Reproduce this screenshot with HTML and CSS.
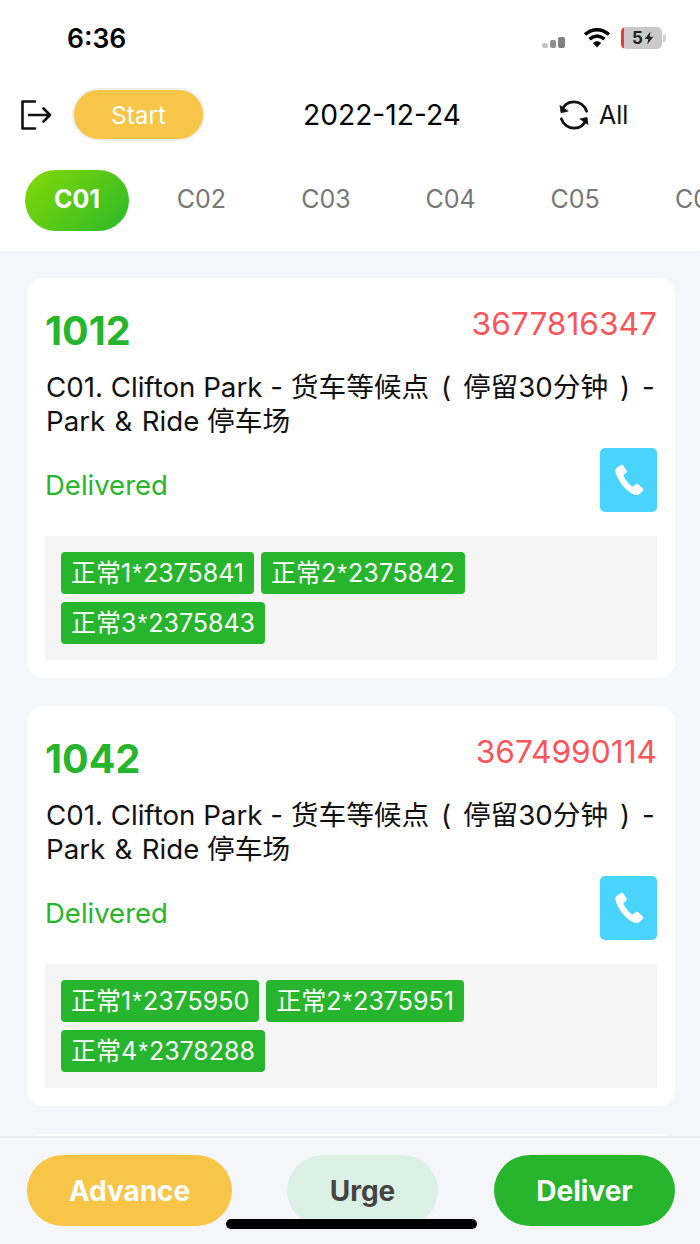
FILE: index.html
```html
<!DOCTYPE html>
<html lang="en">
<head>
<meta charset="utf-8">
<title>Deliveries</title>
<link rel="stylesheet" href="styles.css">
</head>
<body>
<div class="app">
  <header class="header">
    <div class="status">
      <span class="time">6:36</span>
      <div class="status-icons">
        <svg class="signal" width="24" height="14" viewBox="0 0 24 14"><rect x="0" y="7" width="6" height="5" rx="2" fill="#c4c4c4"/><rect x="8" y="4" width="6" height="8" rx="2" fill="#8f8f8f"/><rect x="16" y="1" width="7" height="11" rx="2" fill="#808080"/></svg>
        <svg class="wifi" width="28" height="22" viewBox="0 0 28 22"><path d="M2 7.500C9.500 1 18.500 1 26 7.500" fill="none" stroke="#000" stroke-width="3.500"/><path d="M6.500 12.200C11.500 8 16.500 8 21.500 12.200" fill="none" stroke="#000" stroke-width="3.500"/><path d="M9.800 16C12.500 13.500 15.500 13.500 18.200 16L14 20.500Z" fill="#000"/></svg>
        <div class="battery"><span class="batt-red"></span><span class="batt-text">5</span><svg class="bolt" width="10" height="14" viewBox="0 0 10 14"><path d="M6.500 0.500L0.800 8H4.300L3.300 13.500L9.200 5.800H5.700Z" fill="#222"/></svg></div>
        <span class="batt-cap"></span>
      </div>
    </div>
    <div class="toolbar">
      <svg class="logout" width="32" height="32" viewBox="0 0 32 32"><path d="M15 2.500H2.500V29.500H15" fill="none" stroke="#111" stroke-width="2.600" stroke-linecap="round" stroke-linejoin="round"/><path d="M9 16H30M23.500 9.500L30 16L23.500 22.500" fill="none" stroke="#111" stroke-width="2.600" stroke-linecap="round" stroke-linejoin="round"/></svg>
      <button class="start">Start</button>
      <span class="date">2022-12-24</span>
      <div class="all">
        <svg width="32" height="30" viewBox="0 0 34 32"><path d="M4 11.500C6 5.500 11 2 17 2C23 2 28.500 5.800 30.500 12" fill="none" stroke="#111" stroke-width="2.900" stroke-linecap="round"/><path d="M30 20.500C28 26.500 23 30 17 30C11 30 5.500 26.200 3.500 20" fill="none" stroke="#111" stroke-width="2.900" stroke-linecap="round"/><path d="M1.500 5L3 14L11.500 12Z" fill="#111"/><path d="M32.500 27L31 18L22.500 20Z" fill="#111"/></svg>
        <span>All</span>
      </div>
    </div>
    <nav class="tabs">
      <span class="tab active">C01</span>
      <span class="tab">C02</span>
      <span class="tab">C03</span>
      <span class="tab">C04</span>
      <span class="tab">C05</span>
      <span class="tab">C06</span>
    </nav>
  </header>
  <main class="list">
    <article class="card">
      <div class="card-top"><span class="code">1012</span><span class="phone">3677816347</span></div>
      <p class="addr">C01. Clifton Park - <span class="cn">货车等候点 ( 停留30分钟 ) -</span> <span class="en">Park &amp; Ride</span> 停车场</p>
      <div class="state-row"><span class="state">Delivered</span>
        <button class="call"><svg width="30" height="32" viewBox="0 0 30 32"><path d="M6.500 1.200L3.300 3.200C1.200 4.500 0.800 6.800 1.800 9.500C3.800 15 6.700 20 11 24.300C14 27.300 18 30.300 21 31C23 31.500 24.500 30.800 26 29.500L28.700 27C29.500 26.200 29.500 25.200 28.800 24.500L24.300 20.300C23.500 19.600 22.500 19.500 21.700 20.200L19.500 22C18.700 22.600 17.800 22.500 17 21.800C14 19.300 11.500 16 9.800 12.500C9.400 11.600 9.600 10.800 10.400 10.200L12 9C12.800 8.300 13 7.400 12.500 6.500L9.500 1.800C8.800 0.800 7.500 0.600 6.500 1.200Z" fill="#fff"/></svg></button>
      </div>
      <div class="tags">
        <span class="tag">正常1<span class="star">*</span>2375841</span>
        <span class="tag">正常2<span class="star">*</span>2375842</span>
        <span class="tag">正常3<span class="star">*</span>2375843</span>
      </div>
    </article>
    <article class="card">
      <div class="card-top"><span class="code">1042</span><span class="phone">3674990114</span></div>
      <p class="addr">C01. Clifton Park - <span class="cn">货车等候点 ( 停留30分钟 ) -</span> <span class="en">Park &amp; Ride</span> 停车场</p>
      <div class="state-row"><span class="state">Delivered</span>
        <button class="call"><svg width="30" height="32" viewBox="0 0 30 32"><path d="M6.500 1.200L3.300 3.200C1.200 4.500 0.800 6.800 1.800 9.500C3.800 15 6.700 20 11 24.300C14 27.300 18 30.300 21 31C23 31.500 24.500 30.800 26 29.500L28.700 27C29.500 26.200 29.500 25.200 28.800 24.500L24.300 20.300C23.500 19.600 22.500 19.500 21.700 20.200L19.500 22C18.700 22.600 17.800 22.500 17 21.800C14 19.300 11.500 16 9.800 12.500C9.400 11.600 9.600 10.800 10.400 10.200L12 9C12.800 8.300 13 7.400 12.500 6.500L9.500 1.800C8.800 0.800 7.500 0.600 6.500 1.200Z" fill="#fff"/></svg></button>
      </div>
      <div class="tags">
        <span class="tag">正常1<span class="star">*</span>2375950</span>
        <span class="tag">正常2<span class="star">*</span>2375951</span>
        <span class="tag">正常4<span class="star">*</span>2378288</span>
      </div>
    </article>
    <article class="card card-peek"></article>
  </main>
  <footer class="footer">
    <button class="act advance">Advance</button>
    <button class="act urge">Urge</button>
    <button class="act deliver">Deliver</button>
  </footer>
  <div class="home-bar"></div>
</div>
</body>
</html>
```

FILE: styles.css
```css
* { box-sizing: border-box; }
html, body { margin: 0; padding: 0; }
body { width: 700px; height: 1244px; overflow: hidden; background: #f5f6fa; font-family: Inter, "Noto Sans CJK SC", sans-serif; color: #111; }
button { font-family: inherit; border: 0; padding: 0; }
.app { position: relative; width: 700px; height: 1244px; overflow: hidden; display: flex; flex-direction: column; }

.header { height: 251px; background: #fff; flex: none; box-shadow: 0 1px 3px rgba(0,0,0,.02); }
.status { height: 76px; display: flex; align-items: center; justify-content: space-between; padding: 0 34px 0 67px; }
.time { font-size: 26.500px; font-weight: 600; color: #000; }
.status-icons { display: flex; align-items: center; }
.signal { margin: 10px 17px 0 0; }
.wifi { margin-right: 10px; }
.battery { width: 41px; height: 22px; background: #c9c9c9; border-radius: 5px; position: relative; overflow: hidden; display: flex; align-items: center; justify-content: center; padding-left: 3px; gap: 1px; }
.batt-red { position: absolute; left: 0; top: 0; bottom: 0; width: 3px; background: #f0383a; }
.batt-text { font-size: 17px; font-weight: 700; color: #222; }
.batt-cap { width: 3px; height: 8px; background: #d3d3d3; border-radius: 0 2px 2px 0; margin-left: 1px; }

.toolbar { height: 78px; display: flex; align-items: center; padding-left: 20px; }
.logout { flex: none; margin-top: -1px; }
.start { width: 133px; height: 53px; margin-left: 20px; border-radius: 27px; background: #f7c548; border: 2px solid #eeeeee; color: #fff; font-size: 24.300px; margin-top: -1px; }
.date { margin-left: 98px; font-size: 28.200px; color: #000; width: 157px; white-space: nowrap; }
.all { margin-left: 98px; display: flex; align-items: center; gap: 9px; font-size: 25px; color: #111; }

.tabs { height: 97px; display: flex; align-items: center; padding-left: 25px; gap: 0; overflow: hidden; margin-top: -2px; }
.tab { flex: none; width: 124.600px; text-align: center; font-size: 25px; color: #777; padding-bottom: 3px; }
.tab.active { width: 104px; height: 61px; line-height: 58px; padding-bottom: 0; border-radius: 31px; margin-right: 10px; color: #fff; font-weight: 700; background: linear-gradient(135deg, #86da06, #2ab82a); }

.list { flex: 1; padding: 27px 25px 0 27px; display: flex; flex-direction: column; gap: 28px; }
.card { background: #fff; border-radius: 16px; height: 400px; flex: none; padding: 22px 18px 18px 18px; }
.card-top { display: flex; justify-content: space-between; align-items: flex-start; height: 70px; }
.code { font-size: 39.500px; font-weight: 700; color: #26b52d; line-height: 62px; }
.phone { font-size: 31.700px; color: #f9555b; line-height: 48px; }
.addr { margin: 0 0 0 1px; font-size: 27.700px; line-height: 34px; color: #111; height: 68px; }
.cn { word-spacing: 4px; }
.en { word-spacing: 1.500px; }
.state-row { display: flex; justify-content: space-between; align-items: center; height: 64px; margin-top: 10px; }
.state { font-size: 27.500px; color: #26b52d; padding-top: 9px; }
.call { width: 57px; height: 64px; background: #48d4fd; border-radius: 5px; display: flex; align-items: center; justify-content: center; }
.tags { margin-top: 24px; height: 124px; background: #f5f5f5; padding: 16px 16px; display: flex; flex-wrap: wrap; gap: 8px 7px; align-content: flex-start; }
.tag { height: 42px; line-height: 42px; padding: 0 10px; background: #26b52d; border-radius: 4px; color: #fff; font-size: 25px; white-space: nowrap; }
.star { font-family: "Liberation Sans", sans-serif; margin: 0 1px; }

.footer { position: absolute; left: 0; right: 0; bottom: 0; height: 108px; background: #f5f6fa; border-top: 2px solid #ececee; display: flex; align-items: flex-start; padding: 17px 25px 0 27px; justify-content: space-between; }
.act { height: 71px; border-radius: 36px; font-size: 28px; font-weight: 700; color: #fff; }
.advance { width: 205px; background: #f7c548; }
.urge { width: 151px; background: #dcf1e5; color: #444; margin-left: -1px; }
.deliver { width: 181px; background: #26b52d; }
.home-bar { position: absolute; left: 226px; top: 1219px; width: 251px; height: 10px; background: #000; border-radius: 5px; }
```
